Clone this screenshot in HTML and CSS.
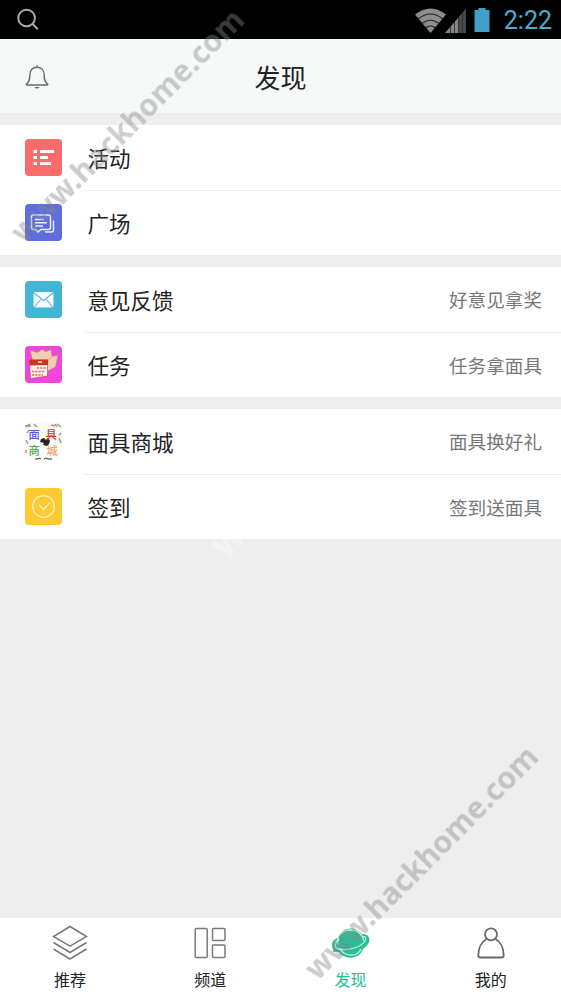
FILE: index.html
```html
<!DOCTYPE html>
<html lang="zh-CN">
<head>
<meta charset="utf-8">
<title>发现</title>
<link rel="stylesheet" href="styles.css">
</head>
<body>
<div class="app">
  <div class="status">
    <svg class="search" width="24" height="24" viewBox="0 0 24 24"><circle cx="10.6" cy="10" r="8.3"/><path d="M16.600 16l5.200 5.300"/></svg>
    <div class="signals">
      <svg width="84" height="30" viewBox="0 0 84 30">
        <path d="M5 9.500Q20.500-2.500 36 9.500L20.500 28z" fill="#8d8d8d"/>
        <path d="M8 14Q20.500 4 33 14M12 18.500Q20.500 12 29 18.500M15.500 23Q20.500 19 25.500 23" fill="none" stroke="#222" stroke-width="1.200"/>
        <path d="M35 28L56 4V28z" fill="#888"/><path d="M49 12L56 4V28H49z" fill="#484848"/>
        <path d="M40.500 21v7M44.500 17v11M48.500 12v16M52.500 8v20" stroke="#333" stroke-width="1"/>
        <path d="M64.500 5h4V3h7v2h4v22h-15z" fill="#429fc5"/>
      </svg>
      <span class="time">2:22</span>
    </div>
  </div>
  <header class="header">
    <svg class="bell" width="26" height="26" viewBox="0 0 26 26"><path d="M2.500 20c3-2.500 3.300-4.500 3.300-9 0-4.800 3-7.800 7.200-7.800s7.200 3 7.200 7.800c0 4.500.3 6.500 3.300 9q.8 1-.5 1H3q-1.300 0-.5-1zM13 1.200v2"/><path class="clapper" d="M10.300 23h5.400q-2.700 3-5.400 0z"/></svg>
    <h1>发现</h1>
  </header>
  <main>
    <section class="group">
      <div class="row"><svg class="icon" viewBox="0 0 37 37"><rect width="37" height="37" rx="4" fill="#fb6b6b"/><path d="M8.500 12.500h3.500M15 12.500h14M8.500 18.500h3.500M15 18.500h8M8.500 24.700h3.500M15 24.700h11" stroke="#fff" stroke-width="2.800"/></svg><div class="cell"><span class="label">活动</span></div></div>
      <div class="row"><svg class="icon" viewBox="0 0 37 37"><rect width="37" height="37" rx="4" fill="#5e6fdc"/><path d="M8.500 11h15q2 0 2 2v10.500q0 2-2 2h-7.500l-3 2.500-2.500-2.500h-2q-2 0-2-2V13q0-2 2-2zM10 15.500h9M10 18.800h12M10 22h8M28.500 16.500v9.500q0 2-2 2H20" fill="none" stroke="#edf1ff" stroke-width="1.400"/></svg><div class="cell"><span class="label">广场</span></div></div>
    </section>
    <section class="group">
      <div class="row"><svg class="icon" viewBox="0 0 37 37"><rect width="37" height="37" rx="4" fill="#43b5d6"/><rect x="8.500" y="11" width="20" height="15.500" rx="2" fill="#f0fcff"/><path d="M9 12l9.500 7.500L28 12M9.500 26l6.500-8M27.500 26L21 18" fill="none" stroke="#6eb6ca" stroke-width="1.100"/></svg><div class="cell"><span class="label">意见反馈</span><span class="note">好意见拿奖</span></div></div>
      <div class="row"><svg class="icon" viewBox="0 0 37 37"><rect width="37" height="37" rx="4" fill="#f344dc"/><path d="M5 4l7 2.500 5-3 4 2 5-2 1 7 6-1.500-2.500 12-8 4H10z" fill="#f2ceb2" stroke="#b9817d" stroke-width=".6"/><path d="M26 11l-3 4-1 10" fill="none" stroke="#c88e80" stroke-width=".7"/><path d="M4.500 14.500l18-.5v16L5.500 32.500z" fill="#fff2ec" stroke="#95544e" stroke-width=".6"/><path d="M4 13.500h19v5.500l-18.500.5z" fill="#c83725"/><path d="M13 16h4" stroke="#f9c2a3" stroke-width="2"/><path d="M12 22h9M7 25.500h13M7 29h11" stroke="#db6969" stroke-width="1.500" stroke-dasharray="2.200 1"/></svg><div class="cell"><span class="label">任务</span><span class="note">任务拿面具</span></div></div>
    </section>
    <section class="group">
      <div class="row"><svg class="icon mall" viewBox="0 0 37 37"><rect width="37" height="37" rx="3" fill="#fafaf7"/><path d="M0 3h6M9 1l3 3M26 2l4 1M32 1l4 3M1 17l2 4M34 15l2 5" stroke="#7ead8d" stroke-width="1.500"/><path d="M1 4l4-3M2 10l2-3M30 1l2 3M34 12l2-2M1 27v3" stroke="#cb6e65" stroke-width="1.200"/><path d="M16 16l3-1 2 2 2-2 2 3-1 3-2 2-4-1 1-2-4-1z" fill="#27231f"/><path d="M10 36h3l1-1 2 1M19 36l2-1 2 1h4" stroke="#333" fill="none"/><text x="3.500" y="15.500" fill="#5557e7">面</text><text x="20.500" y="15.500" fill="#df3037">具</text><text x="3.500" y="32" fill="#4aac58">商</text><text x="21.500" y="32" fill="#f0a474">城</text></svg><div class="cell"><span class="label">面具商城</span><span class="note">面具换好礼</span></div></div>
      <div class="row"><svg class="icon" viewBox="0 0 37 37"><rect width="37" height="37" rx="4" fill="#fdca32"/><circle cx="18.500" cy="18.500" r="10.800" fill="none" stroke="#fff3c2" stroke-width="1.300"/><path d="M14 17l4.500 4.500L25 14.500" fill="none" stroke="#fff3c2" stroke-width="1.300"/></svg><div class="cell"><span class="label">签到</span><span class="note">签到送面具</span></div></div>
    </section>
  </main>
  <nav class="tabs">
    <div class="tab"><svg viewBox="0 0 38 38"><path d="M19 2.500l16.500 10L19 22.200 2.500 12.500zM2.500 18.500L19 28.500l16.500-10M2.500 25L19 35l16.500-10"/></svg><span>推荐</span></div>
    <div class="tab"><svg viewBox="0 0 38 38"><rect x="4.200" y="4.500" width="12" height="29" rx="1"/><rect x="21.500" y="4.500" width="12.500" height="12" rx="1"/><rect x="21.500" y="21" width="12.500" height="12.500" rx="1"/></svg><span>频道</span></div>
    <div class="tab active"><svg viewBox="0 0 38 38"><path class="planet" d="M2 28C-2 21 1 15 6 14 9 6 16 3.500 22 5c4 1 6 3 8 5 7 0 9 5 6 10-2 3-3 3-5 5-3 8-11 10-17 8-4-1-6-3-7-5-2 0-3 0-5 0z"/><path class="ring" d="M6 21C4 12 10 6 19 6c7 0 12 5 13 11M9 26c4 6 16 8 20-1"/><path class="ring" d="M7 15c-5 4-5 9 0 10 10 2 22-2 26-8 2-3 0-5-3-4"/></svg><span>发现</span></div>
    <div class="tab"><svg class="person" viewBox="0 0 38 38"><circle cx="19" cy="10.300" r="6"/><path d="M14.500 15C9 18 6.300 25 6.300 31.500q0 2 2 2h21.400q2 0 2-2C31.700 25 29 18 23.500 15"/></svg><span>我的</span></div>
  </nav>
  <svg class="watermark" viewBox="0 0 561 999">
    <g fill="#888"><text transform="translate(23.500 244.500) rotate(-45)" textLength="315" lengthAdjust="spacingAndGlyphs">www.hackhome.com</text><text transform="translate(317.500 981.500) rotate(-45)" textLength="315" lengthAdjust="spacingAndGlyphs">www.hackhome.com</text></g>
    <text class="faint" transform="translate(226 560) rotate(-44)">W</text>
  </svg>
</div>
</body>
</html>
```
FILE: styles.css
```css
* { box-sizing: border-box; }
body { margin: 0; font-family: "Noto Sans CJK SC", sans-serif; color: #222; }
.app { position: relative; display: flex; flex-direction: column; height: 999px; background: #eee; overflow: hidden; }
.status { height: 39px; flex: none; background: #000; display: flex; align-items: center; justify-content: space-between; padding: 0 9px 0 16px; }
.search { fill: none; stroke: #aaa; stroke-width: 2; }
.signals { display: flex; align-items: center; gap: 10px; }
.time { font: 25px/39px Roboto, sans-serif; color: #4bacd4; padding-top: 2px; }
.header { height: 74px; flex: none; background: #f7f9f9; display: grid; grid-template-columns: 76px 1fr 76px; align-items: center; }
.bell { margin-left: 24px; margin-top: 2px; fill: none; stroke: #686b6d; stroke-width: 1.4; }
.bell .clapper { fill: #686b6d; stroke: none; }
h1 { margin: 0; padding-top: 1px; font-size: 26px; font-weight: 400; line-height: 38px; text-align: center; }
main { flex: 1; padding-top: 12px; display: flex; flex-direction: column; gap: 12px; }
.group { background: #fff; }
.row { height: 65px; display: flex; align-items: center; padding-left: 25px; }
.icon { width: 37px; height: 37px; flex: none; }
.mall text { font-size: 11.3px; font-weight: 500; }
.cell { flex: 1; height: 100%; margin-left: 23px; padding: 0 19px 1px 2.5px; display: flex; align-items: center; justify-content: space-between; }
.row + .row .cell { border-top: 1px solid #ebebeb; }
.label { font-size: 21.5px; }
.note { font-size: 18.6px; color: #777; padding-bottom: 1px; }
.tabs { height: 81px; flex: none; background: #fff; display: grid; grid-template-columns: repeat(4, 1fr); }
.tab { display: flex; flex-direction: column; align-items: center; padding-top: 6px; font-size: 16px; line-height: 24px; }
.tab svg { width: 38px; height: 38px; fill: none; stroke: #777b7e; stroke-width: 1.5; }
.tab span { margin-top: 5px; }
.tab .person { stroke: #66696c; stroke-width: 1.8; }
.active { color: #2bbd98; }
.tab .planet { fill: #2bbd98; stroke: none; }
.tab .ring { stroke: #c9f5e5; stroke-width: 1.3; }
.watermark { position: absolute; inset: 0; width: 561px; height: 999px; pointer-events: none; }
.watermark text { font: 700 31px "Noto Sans", sans-serif; }
.watermark g { opacity: .42; }
.watermark .faint { fill: #fff; opacity: .35; }
```
